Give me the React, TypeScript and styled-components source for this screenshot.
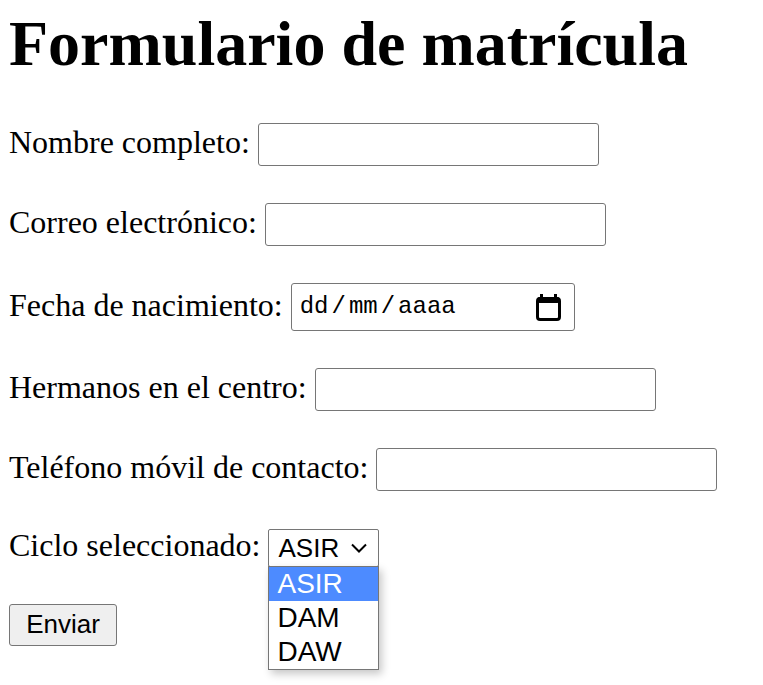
import styled, { createGlobalStyle } from "styled-components";

const Global = createGlobalStyle`
  body {
    margin: 0;
    background: #fff;
    color: #000;
    font-family: "Liberation Serif", "Times New Roman", serif;
  }
`

const Page = styled.div`
  padding: 0 8px 60px;
`

const Title = styled.h1`
  font-size: 64px;
  font-weight: 700;
  margin: 7px 0 43px 1px;
  line-height: 73px;
`

const Form = styled.form`
  display: flex;
  flex-direction: column;
  align-items: flex-start;
  gap: 37px;
`

const Row = styled.div`
  display: flex;
  align-items: center;
  gap: 8px;
  font-size: 32px;
  line-height: 37px;
  margin-left: 1px;
`

const Label = styled.label`
  position: relative;
  top: -2px;
`

const TextInput = styled.input`
  box-sizing: border-box;
  width: 341px;
  height: 43px;
  border: 1px solid #767676;
  border-radius: 3px;
  padding: 2px 4px;
  font-size: 26px;
  font-family: "Liberation Sans", Arial, sans-serif;
  background: #fff;
  outline: none;
`

const DateBox = styled.div`
  box-sizing: border-box;
  width: 284px;
  height: 48px;
  border: 1px solid #767676;
  border-radius: 3px;
  display: flex;
  align-items: center;
  justify-content: space-between;
  padding: 0 12px 0 8px;
  font-family: "Liberation Mono", "DejaVu Sans Mono", monospace;
  font-size: 24px;
`

const DateText = styled.span`
  display: flex;
  align-items: center;
  padding-bottom: 2px;
`

const Sep = styled.span`
  margin: 0 3px;
`

const SelectWrap = styled.div`
  position: relative;
  width: 111px;
  height: 39px;
`

const SelectBox = styled.div`
  box-sizing: border-box;
  width: 100%;
  height: 38px;
  margin-top: 1px;
  border: 1px solid #767676;
  border-radius: 2px;
  display: flex;
  align-items: center;
  justify-content: space-between;
  padding: 0 11px 0 9px;
  font-family: "Liberation Sans", Arial, sans-serif;
  font-size: 26px;
  line-height: 1;
`

const Menu = styled.ul`
  position: absolute;
  left: 0;
  top: 38px;
  z-index: 2;
  box-sizing: border-box;
  width: 111px;
  margin: 0;
  padding: 0;
  list-style: none;
  background: #fff;
  border: 1px solid #767676;
  box-shadow: 3px 4px 8px rgba(0, 0, 0, 0.22);
  font-family: "Liberation Sans", Arial, sans-serif;
  font-size: 28px;
`

const Option = styled.li<{ active?: boolean }>`
  height: 34px;
  line-height: 34px;
  padding-left: 8px;
  background: ${(p) => (p.active ? "#4d8bff" : "#fff")};
  color: ${(p) => (p.active ? "#fff" : "#000")};
`

const Button = styled.button`
  box-sizing: border-box;
  width: 108px;
  height: 42px;
  margin-left: 1px;
  border: 1px solid #767676;
  border-radius: 3px;
  background: #efefef;
  font-family: "Liberation Sans", Arial, sans-serif;
  font-size: 26px;
  color: #000;
  padding: 0 0 2px;
`

function CalendarIcon() {
  return (
    <svg width="26" height="27" viewBox="0 0 26 27">
      <rect x="1.5" y="4.5" width="22" height="21" rx="2.5" fill="none" stroke="#000" strokeWidth="3" />
      <rect x="1.5" y="3" width="22" height="6" rx="2" fill="#000" />
      <rect x="4" y="0" width="3" height="5" fill="#000" />
      <rect x="18" y="0" width="3" height="5" fill="#000" />
    </svg>
  )
}

function Chevron() {
  return (
    <svg width="16" height="10" viewBox="0 0 16 10">
      <path d="M1 1.5 L8 8.5 L15 1.5" fill="none" stroke="#000" strokeWidth="2" />
    </svg>
  )
}

function App() {
  return (
    <Page>
      <Global />
      <Title>Formulario de matrícula</Title>
      <Form onSubmit={(e) => e.preventDefault()}>
        <Row>
          <Label>Nombre completo:</Label>
          <TextInput type="text" />
        </Row>
        <Row>
          <Label>Correo electrónico:</Label>
          <TextInput type="text" />
        </Row>
        <Row>
          <Label>Fecha de nacimiento:</Label>
          <DateBox>
            <DateText>
              dd<Sep>/</Sep>mm<Sep>/</Sep>aaaa
            </DateText>
            <CalendarIcon />
          </DateBox>
        </Row>
        <Row>
          <Label>Hermanos en el centro:</Label>
          <TextInput type="text" />
        </Row>
        <Row>
          <Label>Teléfono móvil de contacto:</Label>
          <TextInput type="text" />
        </Row>
        <Row>
          <Label>Ciclo seleccionado:</Label>
          <SelectWrap>
            <SelectBox>
              <span>ASIR</span>
              <Chevron />
            </SelectBox>
            <Menu>
              <Option active>ASIR</Option>
              <Option>DAM</Option>
              <Option>DAW</Option>
            </Menu>
          </SelectWrap>
        </Row>
        <Button type="submit">Enviar</Button>
      </Form>
    </Page>
  )
}

export default App;
